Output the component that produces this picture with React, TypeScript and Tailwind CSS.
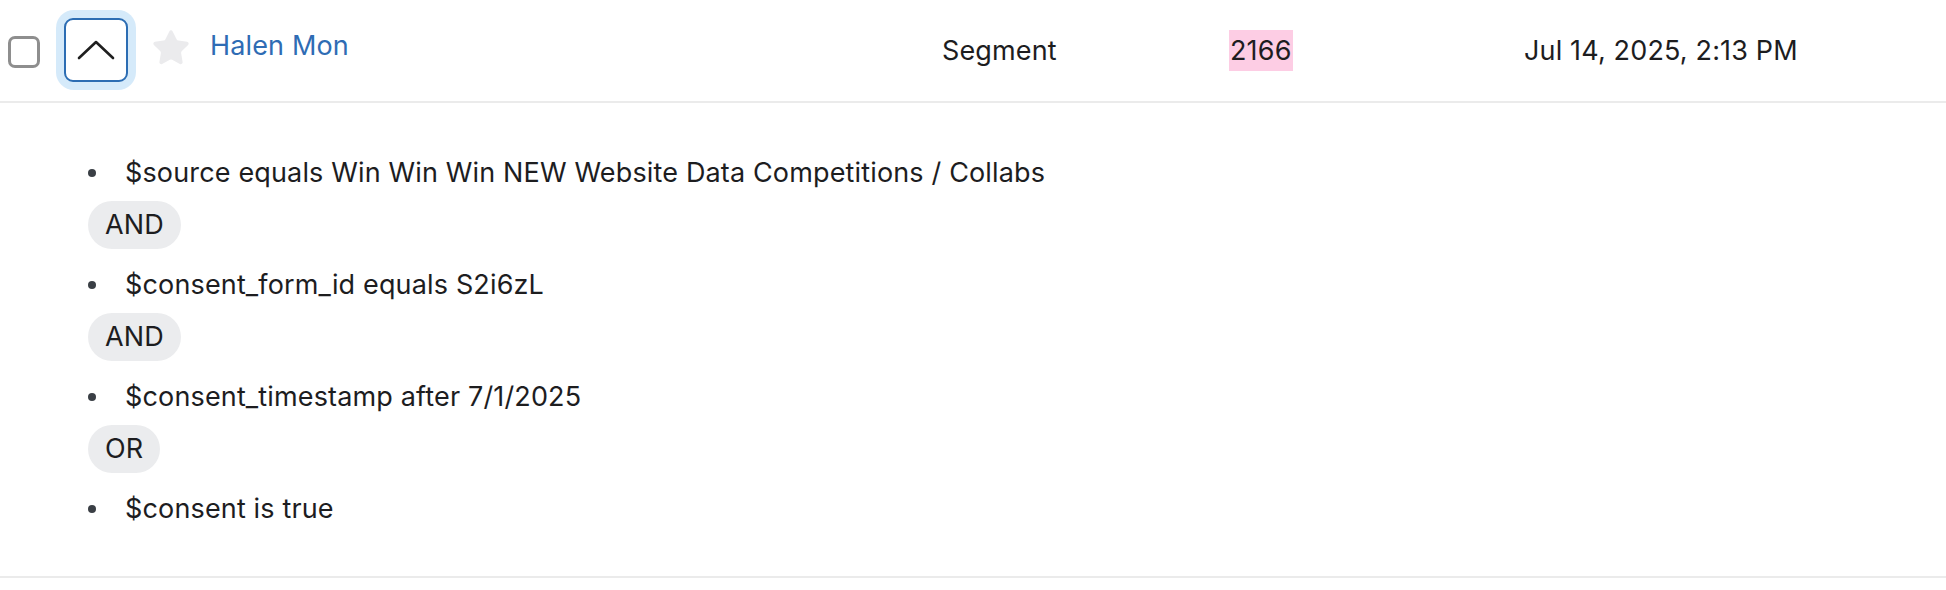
import { Star } from "lucide-react";

const conditions = [
  { text: "$source equals Win Win Win NEW Website Data Competitions / Collabs", op: "AND" },
  { text: "$consent_form_id equals S2i6zL", op: "AND" },
  { text: "$consent_timestamp after 7/1/2025", op: "OR" },
  { text: "$consent is true", op: null },
];

const App = () => {
  return (
    <div
      className="w-[1946px] h-[590px] bg-white text-[#1d1d1f] text-[27px] tracking-[0.15px]"
      style={{ fontFamily: "Inter, 'Noto Sans', sans-serif" }}
    >
      {/* main row */}
      <div className="flex items-center h-[103px] pb-[2px] border-b-2 border-[#ebebeb]">
        <div className="flex items-center pl-2 w-[210px] shrink-0">
          <input
            type="checkbox"
            aria-label="Select row"
            className="appearance-none w-8 h-8 mt-1 rounded-[7px] border-[3.5px] border-[#8e8e8e] bg-white"
          />
          <div className="ml-4 w-20 h-20 rounded-[18px] bg-[#d5eafa] flex items-center justify-center">
            <button
              type="button"
              aria-label="Collapse"
              className="w-16 h-16 rounded-[9px] border-2 border-[#2c6db3] bg-white flex items-center justify-center"
            >
              <svg width="38" height="20" viewBox="0 0 38 20" fill="none">
                <polyline
                  points="2,18 19,2 36,18"
                  stroke="#1f1f1f"
                  strokeWidth="2.6"
                  strokeLinecap="round"
                  strokeLinejoin="round"
                />
              </svg>
            </button>
          </div>
          <Star
            size={40}
            className="ml-[15px] -mt-1 text-[#ebebed]"
            fill="#ebebed"
            strokeWidth={1.2}
          />
        </div>
        <div className="w-[732px] shrink-0 -mt-[6px]">
          <a href="#" className="text-[#2f6cb4]">
            Halen Mon
          </a>
        </div>
        <div className="w-[287px] shrink-0 pt-[4px]">Segment</div>
        <div className="w-[295px] shrink-0 pt-[4px]">
          <span className="bg-[#fdcde4] px-[1px] py-[4px]">2166</span>
        </div>
        <div className="pt-[4px]">Jul 14, 2025, 2:13 PM</div>
      </div>

      {/* expanded details */}
      <div className="pl-[88px] pt-[50px] pb-[47px] border-b-2 border-[#ebebeb]">
        <ul>
          {conditions.map((c) => (
            <li key={c.text}>
              <div className="flex items-center h-10">
                <span className="w-2 h-2 rounded-full bg-[#3a3f45] shrink-0" />
                <span className="ml-[29px]">{c.text}</span>
              </div>
              {c.op && (
                <div className="mt-2 mb-4">
                  <span className="inline-flex items-center h-12 px-[17px] rounded-full bg-[#ebecee]">
                    {c.op}
                  </span>
                </div>
              )}
            </li>
          ))}
        </ul>
      </div>
    </div>
  );
};

export default App;
